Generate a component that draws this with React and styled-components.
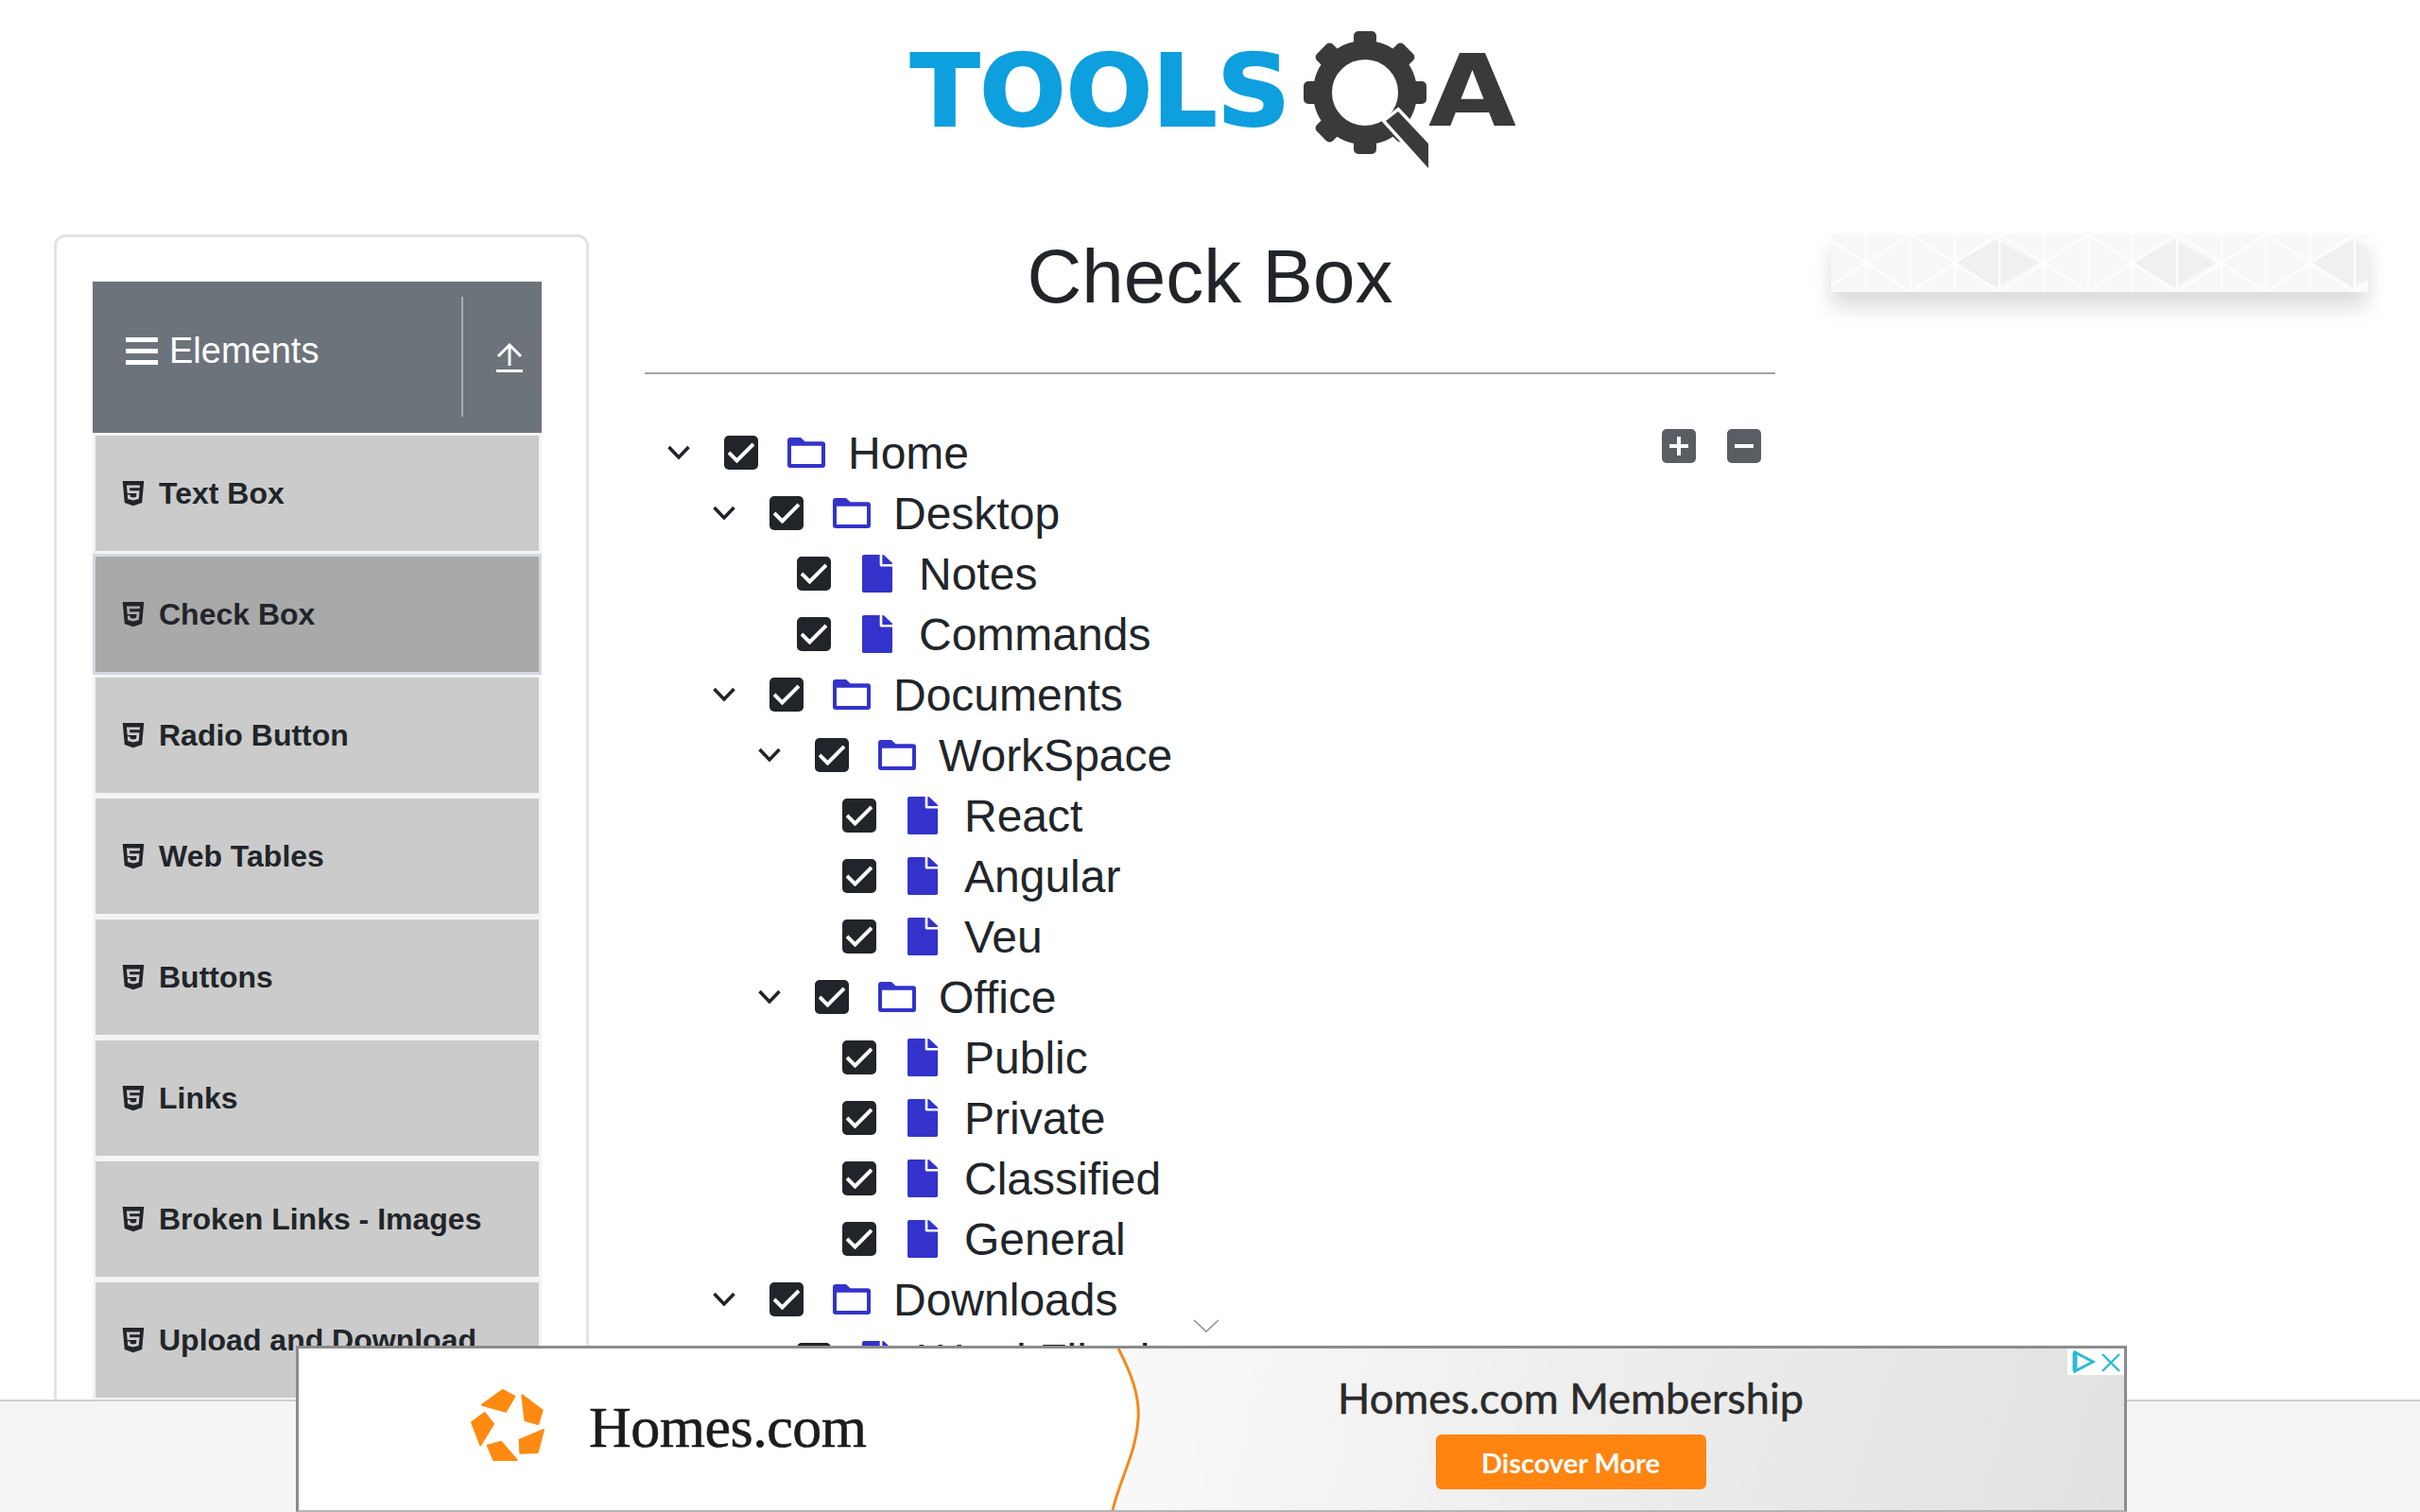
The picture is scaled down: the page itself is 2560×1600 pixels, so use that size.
import React from 'react'
import styled, { createGlobalStyle } from 'styled-components'
import { FaHtml5, FaFile } from 'react-icons/fa'

const GlobalStyle = createGlobalStyle`
  html, body {
    margin: 0;
    padding: 0;
    height: 100%;
    overflow: hidden;
    background: #fff;
    font-family: "Liberation Sans", Arial, sans-serif;
    color: #212529;
  }
  * { box-sizing: border-box; }
`

const Page = styled.div`
  position: relative;
  width: 2560px;
  height: 1600px;
  overflow: hidden;
`

const LogoBar = styled.header`
  height: 248px;
  padding-top: 30px;
  display: flex;
  justify-content: center;
`

const Columns = styled.div`
  display: grid;
  grid-template-columns: 566px 1196px 568px;
  column-gap: 59px;
  padding-left: 57px;
  align-items: start;
`

const SideCard = styled.aside`
  border: 3px solid #e1e3e5;
  border-radius: 12px;
  padding: 47px 47px 40px 38px;
  background: #fff;
`

const GroupHeader = styled.div`
  height: 160px;
  background: #6c737b;
  color: #fff;
  display: flex;
  align-items: center;
`

const GroupTitle = styled.div`
  flex: 1;
  display: flex;
  align-items: center;
  gap: 12px;
  padding-left: 35px;
  font-size: 38px;
  margin-top: -14px;
`

const GroupDivider = styled.div`
  width: 2px;
  height: 127px;
  margin-top: -1px;
  background: #a9adb2;
`

const GroupToggle = styled.div`
  width: 83px;
  display: flex;
  padding-left: 34px;
`

const MenuItem = styled.div`
  height: 128px;
  display: flex;
  align-items: center;
  gap: 12px;
  padding-left: 25px;
  border: 3px solid ${p => (p.$active ? '#d5dae0' : '#f4f4f4')};
  background: ${p => (p.$active ? '#a9a9a9' : '#cbcbcb')};
  font-size: 32px;
  font-weight: 700;
  svg { flex: none; }
`

const Content = styled.main``

const Title = styled.h1`
  margin: 0;
  height: 148px;
  border-bottom: 2px solid #a4a4a4;
  font-size: 80px;
  font-weight: 400;
  line-height: 90px;
  text-align: center;
`

const TreeArea = styled.section`
  display: flex;
  justify-content: space-between;
  align-items: flex-start;
  padding: 51px 15px 0 0;
`

const TreeList = styled.div``

const TreeRow = styled.div`
  height: 64px;
  display: flex;
  align-items: center;
  padding-left: ${p => p.$level * 48}px;
  font-size: 48px;
`

const ToggleSlot = styled.div`
  width: ${p => (p.$leaf ? 65 : 84)}px;
  flex: none;
  padding-left: 24px;
  display: flex;
`

const CheckMark = styled.div`
  width: 36px;
  height: 36px;
  flex: none;
  border-radius: 5px;
  background: #212529;
  display: flex;
  align-items: center;
  justify-content: center;
`

const NodeIcon = styled.div`
  flex: none;
  display: flex;
  color: #3333cc;
  margin-left: ${p => (p.$leaf ? 33 : 31)}px;
  margin-right: ${p => (p.$leaf ? 28 : 24)}px;
`

const ExpandGroup = styled.div`
  display: flex;
  gap: 33px;
  margin-top: 7px;
`

const ExpandButton = styled.div`
  width: 36px;
  height: 36px;
  border-radius: 5px;
  background: #5a5e62;
  display: flex;
  align-items: center;
  justify-content: center;
`

const SideBanner = styled.div`
  height: 61px;
  background: #f8f8f8;
  box-shadow: 0 16px 22px rgba(0, 0, 0, 0.14);
  svg { display: block; }
`

const Footer = styled.footer`
  position: absolute;
  left: 0;
  right: 0;
  bottom: 0;
  height: 119px;
  background: #f5f5f5;
  border-top: 2px solid #cfcfcf;
`

const AdFrame = styled.div`
  position: absolute;
  left: 313px;
  bottom: 0;
  width: 1937px;
  height: 176px;
  display: flex;
  border: 3px solid #8c8c8c;
  border-bottom-color: #b4b4b4;
  border-bottom-width: 2px;
  background: linear-gradient(105deg, #ffffff 30%, #e1e1e1 100%);
`

const AdBrand = styled.div`
  width: 844px;
  flex: none;
  background: #fff;
  display: flex;
  align-items: center;
  gap: 33px;
  padding-left: 164px;
  svg { margin-top: -10px; }
`

const BrandName = styled.div`
  font-family: "Liberation Serif", "Times New Roman", serif;
  font-size: 62px;
  color: #1c1c1c;
  letter-spacing: -0.5px;
  margin-top: -5px;
  -webkit-text-stroke: 0.6px #1c1c1c;
`

const AdCurve = styled.svg`
  position: absolute;
  left: 844px;
  top: 0;
`

const AdOffer = styled.div`
  flex: 1;
  display: flex;
  flex-direction: column;
  align-items: center;
  padding-right: 84px;
  padding-top: 27px;
  gap: 14px;
`

const OfferTitle = styled.div`
  font-family: Lato, "Open Sans", sans-serif;
  font-size: 45px;
  line-height: 50px;
  color: #2a2a2a;
  -webkit-text-stroke: 0.5px #2a2a2a;
`

const OfferButton = styled.div`
  width: 286px;
  height: 58px;
  border-radius: 6px;
  background: #ff8410;
  color: #fff;
  font-family: Lato, "Open Sans", sans-serif;
  font-weight: 700;
  font-size: 29px;
  display: flex;
  align-items: center;
  justify-content: center;
`

const AdChoices = styled.div`
  position: absolute;
  top: 0;
  right: 0;
  width: 60px;
  height: 28px;
  background: #fff;
  display: flex;
`

const CollapseMark = styled.svg`
  position: absolute;
  left: 946px;
  top: -31px;
`

const menu = ['Text Box', 'Check Box', 'Radio Button', 'Web Tables', 'Buttons', 'Links', 'Broken Links - Images', 'Upload and Download', 'Dynamic Properties']

const tree = [
  [0, 'Home'],
  [1, 'Desktop'],
  [2, 'Notes', true],
  [2, 'Commands', true],
  [1, 'Documents'],
  [2, 'WorkSpace'],
  [3, 'React', true],
  [3, 'Angular', true],
  [3, 'Veu', true],
  [2, 'Office'],
  [3, 'Public', true],
  [3, 'Private', true],
  [3, 'Classified', true],
  [3, 'General', true],
  [1, 'Downloads'],
  [2, 'Word File.doc', true],
  [2, 'Excel File.doc', true],
]

const Logo = () => (
  <svg width="660" height="150" viewBox="0 0 660 150">
    <text x="13" y="103" fontFamily="DejaVu Sans" fontWeight="700" fontSize="105" fill="#0e9fdf" stroke="#0e9fdf" strokeWidth="2" textLength="402" lengthAdjust="spacingAndGlyphs">TOOLS</text>
    <g transform="translate(494 68)" fill="#3a3a3a">
      <circle r="45" fill="none" stroke="#3a3a3a" strokeWidth="20" />
      {[0, 45, 90, 135, 180, 225, 270, 315].map(a => (
        <rect key={a} x="-12" y="-65" width="24" height="22" rx="5" transform={`rotate(${a})`} />
      ))}
    </g>
    <polygon points="516,98 529,88 561,122 561,148" fill="#3a3a3a" stroke="#fff" strokeWidth="7" paintOrder="stroke" strokeLinejoin="miter" />
    <text x="561" y="103" fontFamily="DejaVu Sans" fontWeight="700" fontSize="105" fill="#3a3a3a" textLength="93" lengthAdjust="spacingAndGlyphs">A</text>
  </svg>
)

const Burger = () => (
  <svg width="34" height="29" viewBox="0 0 34 29" fill="#fff">
    <rect width="34" height="5" y="0" />
    <rect width="34" height="5" y="12" />
    <rect width="34" height="5" y="24" />
  </svg>
)

const UploadMark = () => (
  <svg width="30" height="32" viewBox="0 0 30 32" fill="none" stroke="#fff" strokeWidth="3">
    <path d="M15 25 V3 M3 15 L15 3 L27 15" />
    <path d="M1 30.5 H29" />
  </svg>
)

const Chevron = () => (
  <svg width="24" height="16" viewBox="0 0 24 16" fill="none" stroke="#212529" strokeWidth="3.6">
    <path d="M1.5 2 L12 13 L22.5 2" />
  </svg>
)

const Tick = () => (
  <svg width="28" height="22" viewBox="0 0 28 22" fill="none" stroke="#fff" strokeWidth="4">
    <path d="M1 11 L9.5 19.5 L27 2" />
  </svg>
)

const FolderGlyph = () => (
  <svg width="40" height="32" viewBox="0 0 40 32" fill="currentColor">
    <path fillRule="evenodd" d="M3 0 H14 L18.5 4.3 H37 A3 3 0 0 1 40 7.3 V29 A3 3 0 0 1 37 32 H3 A3 3 0 0 1 0 29 V3 A3 3 0 0 1 3 0 Z M4 8.7 V28 H36 V8.7 Z" />
  </svg>
)

const FileGlyph = () => <FaFile style={{ width: 32, height: 40 }} preserveAspectRatio="none" />

const BrandMark = () => (
  <svg width="110" height="105" viewBox="0 0 330 315" fill="#ff8a12" stroke="#ff8a12" strokeWidth="6" strokeLinejoin="round">
    <polygon points="90,95 155,48 193,68 165,116" />
    <polygon points="217,64 281,112 268,156 226,144" />
    <polygon points="285,174 266,246 211,248 209,206" />
    <polygon points="107,224 150,212 200,270 127,270" />
    <polygon points="57,150 98,120 126,155 85,223" />
  </svg>
)

const TrianglePattern = () => {
  const step = 94
  const xs = Array.from({ length: 8 }, (_, i) => i * step - 57)
  return (
    <svg width="568" height="61" viewBox="0 0 568 61">
      {[131, 319, 508].map(x => (
        <polygon key={x} points={`${x},30 ${x + 44},6 ${x + 88},30 ${x + 44},56`} fill="#f0f0f0" />
      ))}
      <g stroke="#fff" strokeWidth="2.4" fill="none" opacity="0.9">
        {xs.map(x => (
          <path key={x} d={`M${x} 30 L${x + 47} 0 L${x + 94} 30 L${x + 47} 61 Z M${x + 47} 0 V61`} />
        ))}
        {xs.map(x => <path key={`v${x}`} d={`M${x} 0 V61`} />)}
      </g>
    </svg>
  )
}

export default function App() {
  return (
    <Page>
      <GlobalStyle />
      <LogoBar><Logo /></LogoBar>
      <Columns>
        <SideCard>
          <GroupHeader>
            <GroupTitle><Burger />Elements</GroupTitle>
            <GroupDivider />
            <GroupToggle><UploadMark /></GroupToggle>
          </GroupHeader>
          {menu.map(label => (
            <MenuItem key={label} $active={label === 'Check Box'}>
              <FaHtml5 size={30} />
              {label}
            </MenuItem>
          ))}
        </SideCard>
        <Content>
          <Title>Check Box</Title>
          <TreeArea>
            <TreeList>
              {tree.map(([level, label, leaf]) => (
                <TreeRow key={label} $level={level}>
                  <ToggleSlot $leaf={leaf}>{!leaf && <Chevron />}</ToggleSlot>
                  <CheckMark><Tick /></CheckMark>
                  <NodeIcon $leaf={leaf}>{leaf ? <FileGlyph /> : <FolderGlyph />}</NodeIcon>
                  {label}
                </TreeRow>
              ))}
            </TreeList>
            <ExpandGroup>
              <ExpandButton>
                <svg width="20" height="20" viewBox="0 0 20 20" fill="#fff"><rect x="8" width="4" height="20" /><rect y="8" width="20" height="4" /></svg>
              </ExpandButton>
              <ExpandButton>
                <svg width="20" height="4" viewBox="0 0 20 4" fill="#fff"><rect width="20" height="4" /></svg>
              </ExpandButton>
            </ExpandGroup>
          </TreeArea>
        </Content>
        <SideBanner><TrianglePattern /></SideBanner>
      </Columns>
      <Footer />
      <AdFrame>
        <CollapseMark width="28" height="14" viewBox="0 0 28 14" fill="none" stroke="#8a8a8a" strokeWidth="1.4">
          <path d="M1 1 L14 13 L27 1" />
        </CollapseMark>
        <AdBrand>
          <BrandMark />
          <BrandName>Homes.com</BrandName>
        </AdBrand>
        <AdCurve width="60" height="171" viewBox="0 0 60 171">
          <path d="M0 0 H23 C36 25 46 50 44 75 C42 110 24 140 17 171 H0 Z" fill="#fff" />
          <path d="M23 0 C36 25 46 50 44 75 C42 110 24 140 17 171" fill="none" stroke="#f28a1e" strokeWidth="3" />
        </AdCurve>
        <AdOffer>
          <OfferTitle>Homes.com Membership</OfferTitle>
          <OfferButton>Discover More</OfferButton>
        </AdOffer>
        <AdChoices>
          <svg width="60" height="28" viewBox="0 0 60 28" fill="none" stroke="#2bbcd4" strokeWidth="3">
            <path d="M8 4 V24 L27 14 Z" />
            <path d="M8 4 V24" strokeWidth="5" />
            <path d="M37 6 L55 24 M55 6 L37 24" strokeWidth="2.4" />
          </svg>
        </AdChoices>
      </AdFrame>
    </Page>
  )
}
